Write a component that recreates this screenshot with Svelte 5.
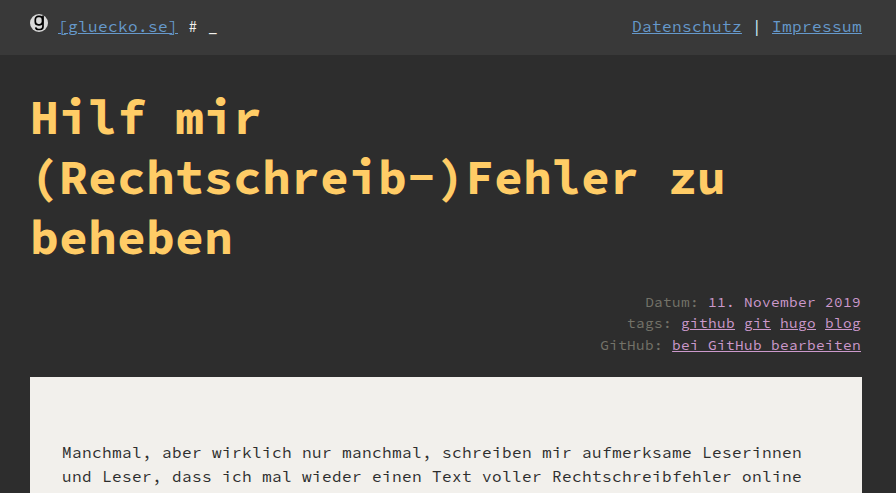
<script>
  const tags = ['github', 'git', 'hugo', 'blog'];
</script>

<div class="page">
  <header>
    <div class="brand">
      <svg width="18" height="18" viewBox="0 0 18 18" aria-hidden="true">
        <circle cx="9" cy="9" r="9" fill="#d9d9d9" />
        <g fill="none" stroke="#000" stroke-width="1.7">
          <path d="M13 1.4V12.6Q13 15.5 10.2 15.5H8.4Q6 15.5 5.7 13.3" />
          <rect x="5.3" y="2.4" width="7.2" height="8.4" rx="3" />
        </g>
      </svg>
      <a href="#home">[gluecko.se]</a>
      <span class="prompt"># _</span>
    </div>
    <nav>
      <a href="#datenschutz">Datenschutz</a><span class="sep">|</span><a href="#impressum">Impressum</a>
    </nav>
  </header>

  <main>
    <h1>Hilf mir (Rechtschreib-)Fehler zu beheben</h1>
    <div class="meta">
      <div>Datum: <span>11. November 2019</span></div>
      <div>tags:{#each tags as tag}{' '}<a href="#{tag}">{tag}</a>{/each}</div>
      <div>GitHub: <a href="#bearbeiten">bei GitHub bearbeiten</a></div>
    </div>
    <article>
      <p>Manchmal, aber wirklich nur manchmal, schreiben mir aufmerksame Leserinnen und Leser, dass ich mal wieder einen Text voller Rechtschreibfehler online</p>
    </article>
  </main>
</div>

<style>
  :global(body) { background: #2d2d2d; }
  .page {
    display: flex;
    flex-direction: column;
    height: 493px;
    font-family: 'Source Code Pro', 'Noto Sans Mono CJK SC', 'Liberation Mono', monospace;
    font-size: 16px;
    line-height: 24px;
    letter-spacing: 0.4px;
  }
  header {
    box-sizing: border-box;
    height: 55px;
    flex: none;
    padding: 14px 34px 0 30px;
    background: #393939;
    display: flex;
    justify-content: space-between;
  }
  .brand {
    display: flex;
    color: #f2f0ec;
    white-space: pre;
  }
  svg { margin-right: 10px; }
  .prompt { margin-left: 10px; }
  a {
    color: #6699cc;
    text-decoration: underline;
    text-decoration-thickness: 1px;
    text-underline-offset: 1px;
  }
  .sep { color: #c8f0f8; margin: 0 10px; }
  main {
    flex: 1;
    display: flex;
    flex-direction: column;
    padding: 32px 34px 0 30px;
  }
  h1 {
    margin: 0;
    color: #ffcc66;
    font-size: 48px;
    line-height: 60px;
    font-weight: 700;
    letter-spacing: 0.2px;
  }
  .meta {
    margin: 24.7px 1px 20.5px 0;
    color: #747369;
    font-size: 14.4px;
    line-height: 21.6px;
    letter-spacing: 0.36px;
    text-align: right;
  }
  .meta span, .meta a { color: #cc99cc; }
  article {
    flex: 1;
    padding: 63px 32px 0;
    background: #f2f0ec;
    color: #2d2d2d;
  }
  p { margin: 0; }
</style>
